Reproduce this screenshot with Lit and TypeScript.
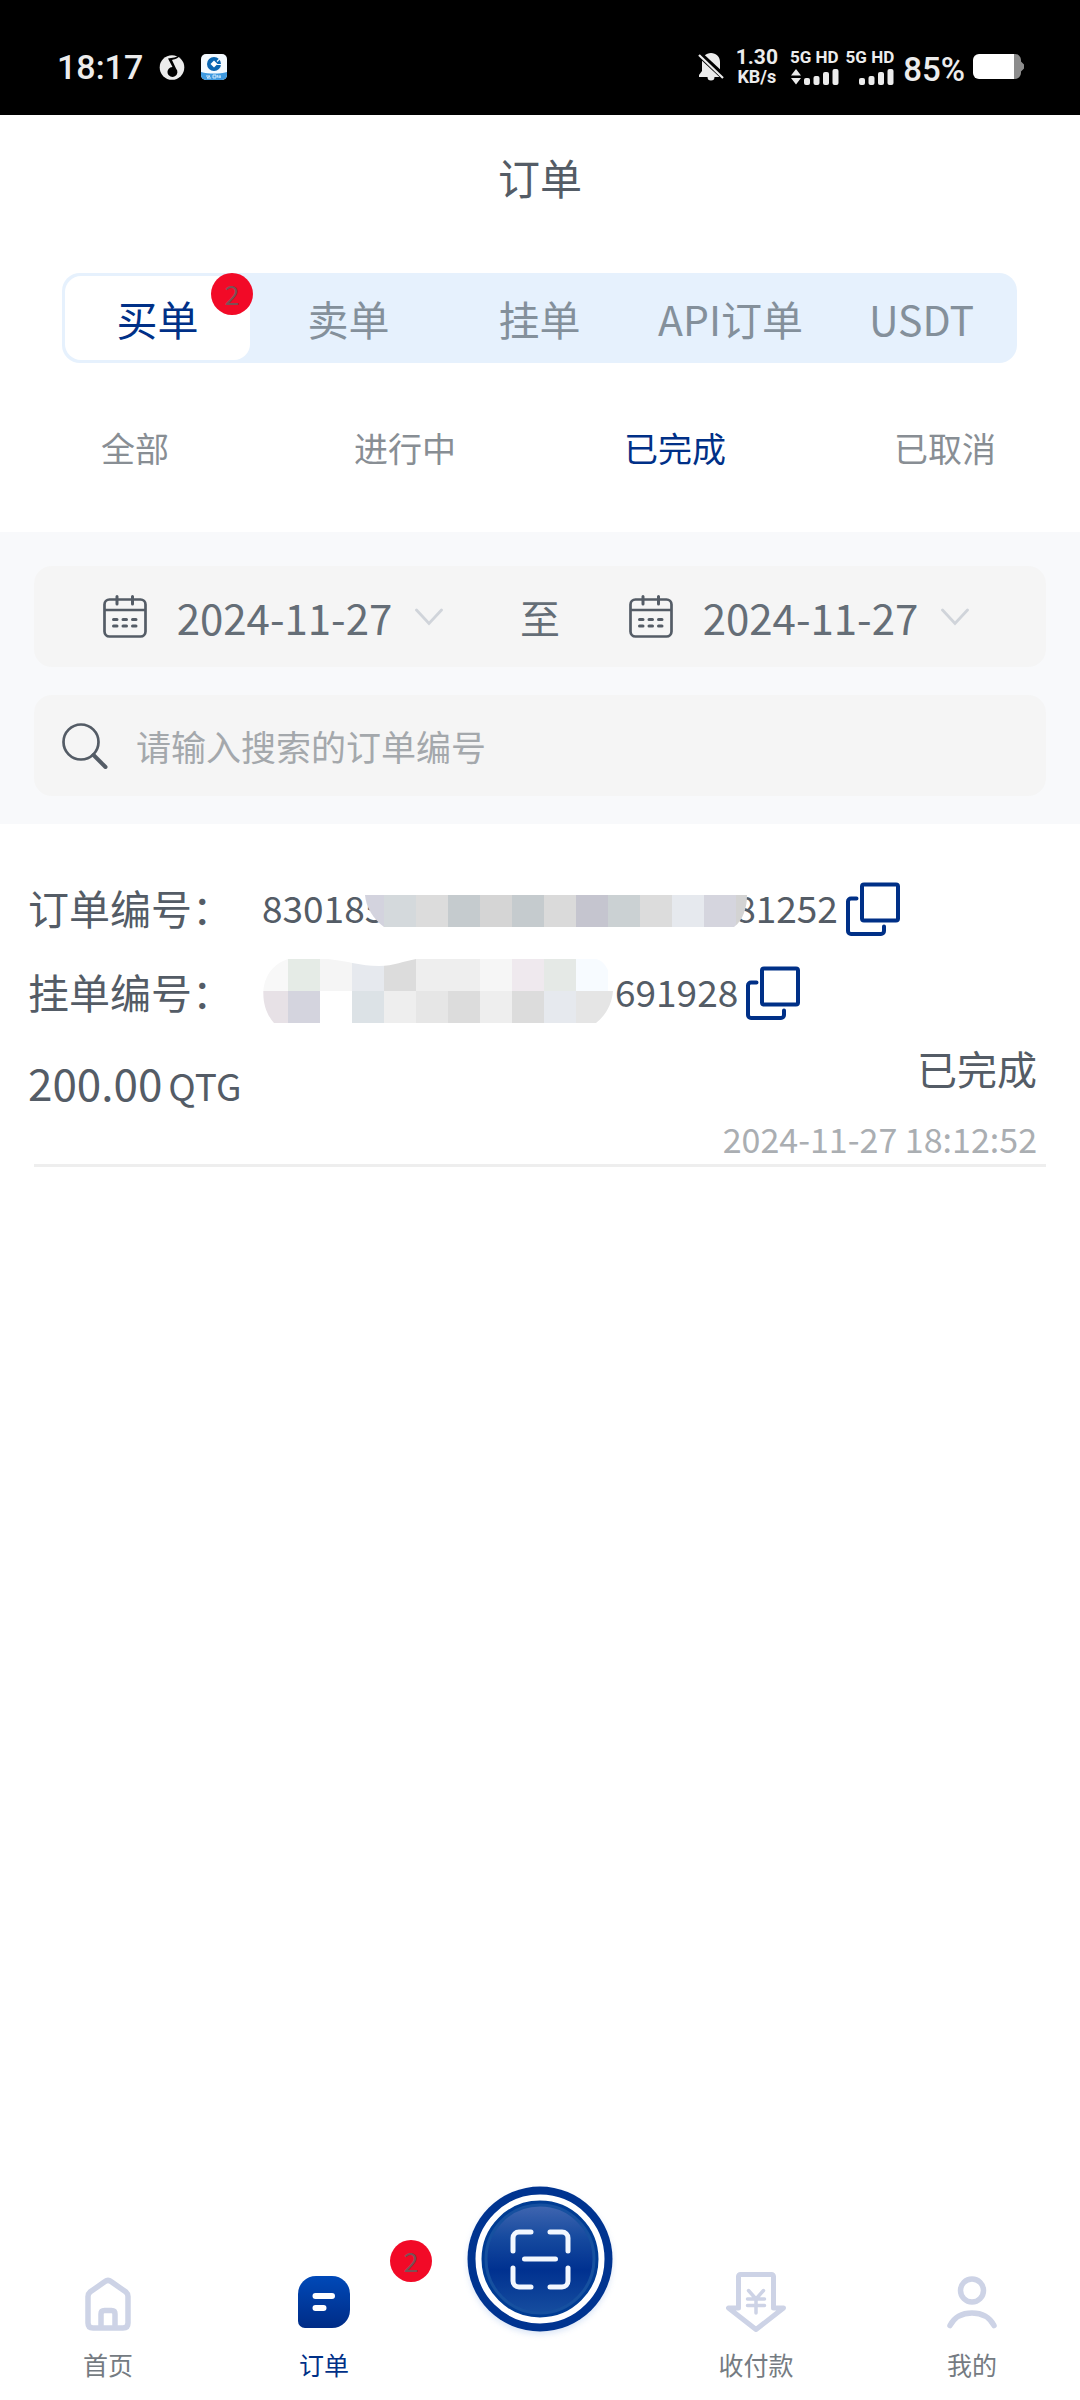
import { LitElement, html, css, svg } from "lit";
import { customElement, property, state } from "lit/decorators.js";
import { classMap } from "lit/directives/class-map.js";

const FONT = css`"Noto Sans CJK SC", "Noto Sans", sans-serif`;

const reset = css`
  :host,
  * {
    box-sizing: border-box;
  }
  button,
  input {
    font: inherit;
    color: inherit;
    background: none;
    border: 0;
    margin: 0;
    padding: 0;
  }
  button {
    cursor: pointer;
  }
  svg {
    display: block;
    flex: none;
  }
`;

@customElement("status-bar")
class StatusBar extends LitElement {
  static styles = [
    reset,
    css`
      :host {
        display: flex;
        align-items: center;
        justify-content: space-between;
        height: 115px;
        padding: 18px 56px 0 57px;
        background: #000;
        color: #ececec;
        font-family: Roboto, "Noto Sans", sans-serif;
        font-weight: 500;
      }
      .side {
        display: flex;
        align-items: center;
      }
      .time {
        font-size: 34px;
        line-height: 40px;
      }
      .music {
        margin-left: 16px;
      }
      .bank {
        margin-left: 16px;
      }
      .speed {
        display: flex;
        flex-direction: column;
        align-items: center;
        margin: 0 12px;
        font-size: 18px;
        line-height: 20px;
        font-weight: 700;
      }
      .rate {
        font-size: 21px;
      }
      .sim {
        display: flex;
        flex-direction: column;
        align-items: flex-end;
        gap: 4px;
        margin-right: 7px;
        font-size: 17px;
        line-height: 16px;
        font-weight: 700;
      }
      .level {
        margin: 6px 8px 0 2px;
        font-size: 33px;
        line-height: 34px;
      }
    `,
  ];

  private sim(arrows: boolean) {
    return html`<span class="sim">
      <span>5G HD</span>
      <svg width="48" height="16" viewBox="0 0 48 16" fill="#ececec">
        ${arrows ? svg`<path d="M0 6.500 5 0l5 6.500zM0 9h10l-5 6.500z" />` : ""}
        <rect x="13" y="9" width="6" height="7" rx="2" />
        <rect x="22.500" y="7" width="6" height="9" rx="2" />
        <rect x="32" y="3" width="6" height="13" rx="2" />
        <rect x="41.500" y="0" width="6" height="16" rx="2" />
      </svg>
    </span>`;
  }

  render() {
    return html`
      <div class="side">
        <span class="time">18:17</span>
        <svg class="music" width="26" height="26" viewBox="0 0 26 26">
          <circle cx="13" cy="13.500" r="12.300" fill="#ececec" />
          <path
            d="M21 0C20 4 17 5 13 6l4 8.500a5 5 0 1 1-3.500-1.500L9 4.500C13 3.500 18 4 21 0z"
            fill="#000"
          />
        </svg>
        <svg class="bank" width="26" height="26" viewBox="0 0 26 26">
          <defs>
            <clipPath id="tile"><rect width="26" height="26" rx="5" /></clipPath>
          </defs>
          <g clip-path="url(#tile)">
            <rect width="26" height="26" fill="#f4faff" />
            <path d="M0 18c8 2 18 2 26 0v8H0z" fill="#3f9ae0" />
            <path d="M5 22h4l-3 2h4M12 21v3h3v-3zM17 21l-1 2h4m-1-2v3" fill="none" stroke="#cfe8fb" />
            <circle cx="13" cy="10" r="7" fill="#0a66b2" />
            <path d="M13 6.500l3.500 3.500-3.500 3.500L9.500 10z" fill="#fff" />
            <path d="M16 7.500 20 3.500M15.500 10.500h6" stroke="#f4faff" stroke-width="1.200" />
          </g>
        </svg>
      </div>
      <div class="side">
        <svg width="26" height="30" viewBox="0 0 26 30">
          <path
            d="M13 1c5 0 9 3.500 9 9v9l3 4v2H16.500a3.500 3.500 0 0 1-7 0H1v-2l3-4v-9c0-5.500 4-9 9-9z"
            fill="#ececec"
          />
          <path d="M-1 0 27 26" stroke="#000" stroke-width="6" />
          <path d="M1 3 25 26" stroke="#ececec" stroke-width="2.200" />
        </svg>
        <span class="speed"><span class="rate">1.30</span><span>KB/s</span></span>
        ${this.sim(true)} ${this.sim(false)}
        <span class="level">85%</span>
        <svg width="51" height="25" viewBox="0 0 51 25">
          <path d="M40 0h2a6 6 0 0 1 6 6v1.500l3 3v4l-3 3V19a6 6 0 0 1-6 6h-2z" fill="#8c8c8c" />
          <path d="M6 0h35v25H6a6 6 0 0 1-6-6V6a6 6 0 0 1 6-6z" fill="#fff" />
        </svg>
      </div>
    `;
  }
}

@customElement("count-badge")
class CountBadge extends LitElement {
  @property({ type: Number }) count = 0;

  static styles = css`
    :host {
      display: flex;
      align-items: center;
      justify-content: center;
      width: 42px;
      height: 42px;
      border-radius: 50%;
      background: #f20a27;
      color: #7c5055;
      font-family: ${FONT};
      font-size: 27px;
      line-height: 42px;
    }
  `;

  render() {
    return html`${this.count}`;
  }
}

@customElement("order-filters")
class OrderFilters extends LitElement {
  @state() private kind = "买单";
  @state() private stage = "已完成";

  static styles = [
    reset,
    css`
      :host {
        display: block;
      }
      .kinds {
        display: grid;
        grid-template-columns: repeat(5, 1fr);
        height: 90px;
        margin: 30px 63px 0 62px;
        border-radius: 18px;
        background: #e6f1fd;
        color: #84909b;
        font-size: 41px;
        line-height: 60px;
      }
      .kind {
        position: relative;
        margin: 3px;
        border-radius: 16px;
        white-space: nowrap;
      }
      .kind.on {
        background: #fff;
        color: #003087;
      }
      .badge {
        position: absolute;
        top: -3px;
        right: -3px;
      }
      .stages {
        display: grid;
        grid-template-columns: repeat(4, 1fr);
        padding: 55px 0 54px;
        color: #888e94;
        font-size: 34px;
        line-height: 60px;
      }
      .stage.on {
        color: #003087;
      }
    `,
  ];

  render() {
    return html`
      <div class="kinds" role="tablist">
        ${["买单", "卖单", "挂单", "API订单", "USDT"].map(
          (name) => html`<button
            class=${classMap({ kind: true, on: name === this.kind })}
            role="tab"
            aria-selected=${name === this.kind}
            @click=${() => (this.kind = name)}
          >
            ${name}${name === "买单" ? html`<count-badge class="badge" .count=${2}></count-badge>` : ""}
          </button>`
        )}
      </div>
      <div class="stages" role="tablist">
        ${["全部", "进行中", "已完成", "已取消"].map(
          (name) => html`<button
            class=${classMap({ stage: true, on: name === this.stage })}
            role="tab"
            aria-selected=${name === this.stage}
            @click=${() => (this.stage = name)}
          >
            ${name}
          </button>`
        )}
      </div>
    `;
  }
}

@customElement("order-search")
class OrderSearch extends LitElement {
  static styles = [
    reset,
    css`
      :host {
        display: flex;
        flex-direction: column;
        gap: 28px;
        padding: 34px 34px 28px;
        background: #f8f9fb;
      }
      .bar {
        height: 101px;
        border-radius: 18px;
        background: #f5f5f5;
      }
      .range {
        display: grid;
        grid-template-columns: 1fr auto 1fr;
        align-items: center;
        color: #656e77;
        font-size: 42px;
        line-height: 60px;
      }
      .date {
        display: flex;
        align-items: center;
        justify-content: center;
        padding-right: 8px;
      }
      .day {
        margin: 0 23px 0 30px;
      }
      .to {
        font-size: 40px;
      }
      .find {
        display: flex;
        align-items: center;
        gap: 28px;
        padding: 0 28px;
      }
      .field {
        flex: 1;
        min-width: 0;
        font-size: 35px;
        line-height: 60px;
        outline: none;
        color: #545c66;
      }
      .field::placeholder {
        color: #a4a8ac;
        opacity: 1;
      }
    `,
  ];

  private date(label: string) {
    return html`<button class="date" aria-label=${label}>
      <svg width="44" height="43" viewBox="0 0 44 43" fill="none" stroke="#545c66" stroke-width="2.700">
        <rect x="1.500" y="4.500" width="41" height="37" rx="5" />
        <path d="M1.500 15h41" />
        <path d="M14 1.500v7.500M29.500 1.500V9" stroke-width="3" stroke-linecap="round" />
        <path d="M10.500 24.500h3.500M20 24.500h3.500M29.500 24.500H33M10.500 31h3.500M20 31h3.500M29.500 31H33" stroke-linecap="round" stroke-width="3" />
      </svg>
      <span class="day">2024-11-27</span>
      <svg width="28" height="18" viewBox="0 0 28 18" fill="none" stroke="#d0d4da" stroke-width="2.800" stroke-linecap="round">
        <path d="M1.500 2 14 15.500 26.500 2" />
      </svg>
    </button>`;
  }

  render() {
    return html`
      <div class="bar range">
        ${this.date("开始日期 2024-11-27")}
        <span class="to">至</span>
        ${this.date("结束日期 2024-11-27")}
      </div>
      <label class="bar find">
        <svg width="46" height="46" viewBox="0 0 46 46" fill="none" stroke="#545c66">
          <circle cx="19" cy="19" r="17.500" stroke-width="2.700" />
          <path d="M31.500 32 43.500 44" stroke-width="4" stroke-linecap="round" />
        </svg>
        <input class="field" type="search" placeholder="请输入搜索的订单编号" aria-label="订单编号" />
      </label>
    `;
  }
}

interface Mask {
  width: number;
  rows: string[][];
  first: number;
  outline: string;
}

const CELL = 32;

const ORDER_MASK: Mask = {
  width: 382,
  first: 19,
  rows: [
    ["#d3d3de", "#d4d9dc", "#dcdcdc", "#c5cbce", "#d5d5d5", "#c5cbce", "#dadada", "#c5c5cf", "#cbd1d3", "#dcdcdc", "#e6e9ee", "#d5d5de", "#d3d3d3"],
  ],
  outline: "M0 0H382C382 13 378 25 369 32H19C8 24 1 12 0 0z",
};

const LISTING_MASK: Mask = {
  width: 351,
  first: 26,
  rows: [
    ["#f8f8f8", "#e5ebe6", "#f5f5f5", "#e6e9ee", "#dcdcdc", "#eeeeee", "#eeeeee", "#f6f6f6", "#efe9ee", "#e5e9e6", "#f7fbff", "#ffffff"],
    ["#e7e1e6", "#d4d4de", "#ffffff", "#dce2e6", "#eeeeee", "#e6e6e6", "#dcdcdc", "#eeeeee", "#dcdcdc", "#e6e9ee", "#e5e5e5", "#e5e5e5"],
  ],
  outline: "M26 0H66C86 2 98 7 117 7 132 7 142 2 154 0H334C344 2 350 16 351 32 350 45 344 56 334 64H12C-4 46-4 10 26 0z",
};

@customElement("order-code")
class OrderCode extends LitElement {
  @property() label = "";
  @property() head = "";
  @property() tail = "";
  @property({ attribute: false }) mask!: Mask;

  static styles = [
    reset,
    css`
      :host {
        display: flex;
        align-items: center;
        height: 84px;
        padding-left: 28px;
        color: #545c66;
        font-size: 41px;
        line-height: 60px;
      }
      .label {
        flex: 0 0 234px;
      }
      .code {
        display: flex;
        align-items: center;
        margin-right: 8px;
        font-size: 37px;
      }
      .mask {
        position: relative;
      }
      .mask.over {
        margin: 8px -12px 0 -20px;
      }
      .mask.lead {
        margin-right: 2px;
      }
      .copy {
        padding-top: 3px;
      }
    `,
  ];

  render() {
    const { width, first, rows, outline } = this.mask;
    const height = rows.length * CELL;
    return html`
      <span class="label">${this.label}</span>
      <span class="code">
        ${this.head}
        <svg
          class=${classMap({ mask: true, over: !!this.head, lead: !this.head })}
          width=${width}
          height=${height}
          viewBox="0 0 ${width} ${height}"
          shape-rendering="crispEdges"
        >
          <defs><clipPath id="shape"><path d=${outline} /></clipPath></defs>
          <g clip-path="url(#shape)">
            ${rows.map((row, y) =>
              row.map(
                (fill, x) =>
                  svg`<rect x=${x ? first + (x - 1) * CELL : 0} y=${y * CELL} width=${x ? CELL : first} height=${CELL} fill=${fill} />`
              )
            )}
          </g>
        </svg>
        ${this.tail}
      </span>
      <button class="copy" aria-label="复制">
        <svg width="54" height="54" viewBox="0 0 54 54" fill="none" stroke="#003087" stroke-width="4" stroke-linecap="round" stroke-linejoin="round">
          <rect x="16" y="2.500" width="36" height="36" rx="2" />
          <path d="M10.500 16.500H5a3 3 0 0 0-3 3V49a3 3 0 0 0 3 3h30a3 3 0 0 0 3-3v-4.500" />
        </svg>
      </button>
    `;
  }
}

@customElement("order-item")
class OrderItem extends LitElement {
  static styles = css`
    :host {
      display: block;
      padding-top: 41px;
      color: #545c66;
    }
    .summary {
      display: flex;
      justify-content: space-between;
      align-items: flex-start;
      padding: 0 43px 0 28px;
    }
    .amount {
      display: flex;
      align-items: baseline;
      gap: 6px;
      font-size: 44px;
      line-height: 98px;
    }
    .unit {
      font-size: 37px;
    }
    .result {
      display: flex;
      flex-direction: column;
      align-items: flex-end;
      gap: 16px;
      padding-top: 5px;
      font-size: 40px;
      line-height: 60px;
    }
    .when {
      color: #aaaeb2;
      font-size: 34px;
      line-height: 50px;
    }
    .rule {
      height: 3px;
      margin: 0 34px;
      border: 0;
      background: #eee;
    }
  `;

  render() {
    return html`
      <order-code label="订单编号：" head="830185" tail="81252" .mask=${ORDER_MASK}></order-code>
      <order-code label="挂单编号：" tail="691928" .mask=${LISTING_MASK}></order-code>
      <div class="summary">
        <div class="amount"><span>200.00</span><span class="unit">QTG</span></div>
        <div class="result">
          <span>已完成</span>
          <time class="when" datetime="2024-11-27T18:12:52">2024-11-27 18:12:52</time>
        </div>
      </div>
      <hr class="rule" />
    `;
  }
}

const homeIcon = svg`<g fill="none" stroke="#cdd3e6" stroke-width="5.500" stroke-linejoin="round">
  <path d="M10 24.500c0-2 .6-3.200 2-4.400L27 9.500c2-1.500 4-1.500 6 0l15 10.600c1.400 1.200 2 2.400 2 4.400V51c0 3-1.600 5-5 5H15c-3.400 0-5-2-5-5z" />
  <path d="M23 56V42c0-2 1-3.500 3.500-3.500h7c2.500 0 3.500 1.500 3.500 3.500v14" />
</g>`;

const orderIcon = svg`<defs>
  <linearGradient id="note" x1="0" y1="0" x2="0" y2="1">
    <stop offset="0" stop-color="#0049b8" /><stop offset="1" stop-color="#002c86" />
  </linearGradient>
</defs>
<path d="M22 4h16a18 18 0 0 1 18 18v16a18 18 0 0 1-18 18H11a7 7 0 0 1-7-7V22A18 18 0 0 1 22 4z" fill="url(#note)" />
<path d="M21.500 24H38M21.500 36h8" stroke="#fff" stroke-width="6" stroke-linecap="round" />`;

const payIcon = svg`<g fill="none" stroke="#cdd3e6" stroke-width="5" stroke-linecap="round" stroke-linejoin="round">
  <path d="M12.500 36V4.500a2 2 0 0 1 2-2h31a2 2 0 0 1 2 2V36h10L30 57.500 2.500 36z" />
  <path d="M22.500 18.500 30 27l7.500-8.500M21.500 27h17M21.500 33.500h17M30 27v14" stroke-width="3.500" />
</g>`;

const meIcon = svg`<g fill="none" stroke="#cdd3e6" stroke-width="5.500" stroke-linecap="round">
  <circle cx="30" cy="18.500" r="11.500" />
  <path d="M8 53.500C12.500 45 20 41 30 41s17.500 4 22 12.500" />
</g>`;

@customElement("tab-bar")
class TabBar extends LitElement {
  static styles = [
    reset,
    css`
      :host {
        display: grid;
        grid-template-columns: repeat(5, 1fr);
        align-items: end;
        padding-bottom: 18px;
        color: #757b82;
        font-size: 25px;
        line-height: 36px;
      }
      .item {
        position: relative;
        display: flex;
        flex-direction: column;
        align-items: center;
        gap: 14px;
        color: inherit;
        text-decoration: none;
      }
      .item.on {
        color: #003087;
      }
      .badge {
        position: absolute;
        top: -32px;
        right: 0;
      }
      .scan {
        display: flex;
        justify-content: center;
        padding-bottom: 38px;
      }
    `,
  ];

  private item(name: string, icon: unknown, href: string, count = 0) {
    return html`<a class=${classMap({ item: true, on: count > 0 })} href=${href}>
      <svg width="60" height="60" viewBox="0 0 60 60">${icon}</svg>
      <span>${name}</span>
      ${count ? html`<count-badge class="badge" .count=${count}></count-badge>` : ""}
    </a>`;
  }

  render() {
    return html`
      ${this.item("首页", homeIcon, "#home")} ${this.item("订单", orderIcon, "#orders", 2)}
      <button class="scan" aria-label="扫一扫">
        <svg width="154" height="162" viewBox="0 0 154 162">
          <defs>
            <linearGradient id="dish" x1="0" y1="0" x2="0" y2="1">
              <stop offset="0" stop-color="#4166b0" />
              <stop offset="0.300" stop-color="#164a9f" />
              <stop offset="0.600" stop-color="#003190" />
              <stop offset="1" stop-color="#164d9f" />
            </linearGradient>
            <filter id="glow" x="-20%" y="-20%" width="140%" height="140%">
              <feGaussianBlur stdDeviation="3" />
            </filter>
          </defs>
          <circle cx="77" cy="80" r="72" fill="#9dbbe8" opacity="0.400" filter="url(#glow)" />
          <circle cx="77" cy="77" r="72.500" fill="#003490" />
          <circle cx="77" cy="77" r="61.500" fill="#003c93" stroke="#fff" stroke-width="6" />
          <circle cx="77" cy="77" r="54" fill="url(#dish)" stroke="#16509f" stroke-width="3" />
          <g fill="none" stroke="#f2f7ff" stroke-width="5" stroke-linecap="round">
            <path d="M50 69V56a6 6 0 0 1 6-6h12M87 50h12a6 6 0 0 1 6 6v13M105 86v13a6 6 0 0 1-6 6H87M68 105H56a6 6 0 0 1-6-6V86M61.500 77h31" />
          </g>
        </svg>
      </button>
      ${this.item("收付款", payIcon, "#pay")} ${this.item("我的", meIcon, "#me")}
    `;
  }
}

@customElement("app-root")
class AppRoot extends LitElement {
  static styles = css`
    :host {
      display: flex;
      flex-direction: column;
      min-height: 100vh;
      background: #fff;
      font-family: ${FONT};
    }
    .title {
      margin: 0;
      padding: 32px 0 36px;
      color: #545c66;
      font-size: 42px;
      font-weight: 400;
      line-height: 60px;
      text-align: center;
    }
    .orders {
      flex: 1;
    }
  `;

  render() {
    return html`
      <status-bar></status-bar>
      <h1 class="title">订单</h1>
      <order-filters></order-filters>
      <order-search></order-search>
      <main class="orders"><order-item></order-item></main>
      <tab-bar></tab-bar>
    `;
  }
}
